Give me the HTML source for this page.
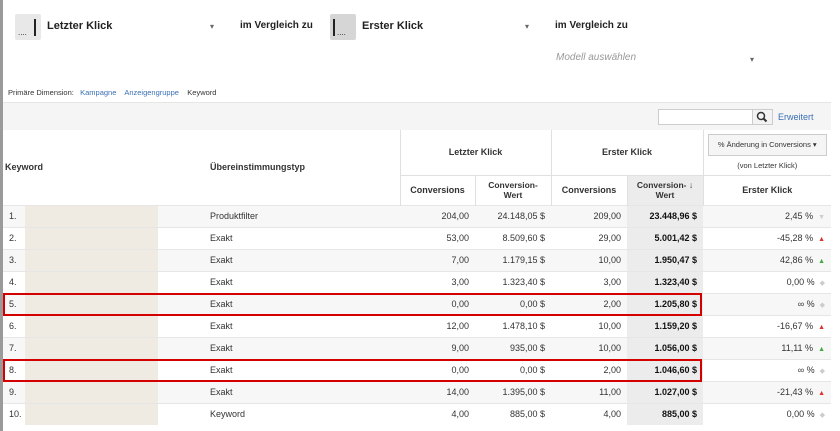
<!DOCTYPE html>
<html><head><meta charset="utf-8"><style>
*{margin:0;padding:0;box-sizing:border-box}
body{width:840px;height:431px;background:#fff;font-family:"Liberation Sans",Arial,sans-serif;font-size:9px;color:#333;position:relative;overflow:hidden}
.a{position:absolute}
.lb{position:absolute;left:0;top:0;width:3px;height:431px;background:#9a9a9a}
.ic{position:absolute;width:26px;height:26px;background:#e8e8e8;border-radius:2px}
.big{font-size:11px;font-weight:bold;color:#222}
.link{color:#3b6fb6}
table{position:absolute;left:3px;top:130px;width:828px;border-collapse:collapse;table-layout:fixed}
td,th{font-size:9px;height:22px;padding:0 6px;white-space:nowrap}
th{font-weight:bold;color:#333;border-left:1px solid #e0e0e0}
tr.r td{border-top:1px solid #e6e6e6}
tr.r:nth-child(odd) td{background:#f7f7f7}
td.n{text-align:right}
td.g{background:#ececec!important;font-weight:bold;color:#111;text-align:right}
td.k{background:#efebe3!important}
.up{color:#d33;font-size:7px}.gr{color:#4a4;font-size:7px}.no{color:#ccc;font-size:7px}
.box{position:absolute;left:3px;width:699px;height:23px;border:2px solid #d40000}
</style></head><body>
<div class="lb"></div>
<div class="ic" style="left:15px;top:14px"><svg width="26" height="26"><rect x="19" y="5" width="2" height="17" fill="#222"/><text x="3" y="21" font-size="8" fill="#222">....</text></svg></div>
<div class="a big" style="left:47px;top:20px">Letzter Klick</div>
<div class="a" style="left:210px;top:22px;color:#666;font-size:8px">▾</div>
<div class="a big" style="left:240px;top:20px;font-size:10px">im Vergleich zu</div>
<div class="ic" style="left:330px;top:14px;background:#d6d6d6"><svg width="26" height="26"><rect x="3" y="5" width="2" height="17" fill="#222"/><text x="7" y="21" font-size="8" fill="#222">....</text></svg></div>
<div class="a big" style="left:362px;top:20px">Erster Klick</div>
<div class="a" style="left:525px;top:22px;color:#666;font-size:8px">▾</div>
<div class="a big" style="left:555px;top:20px;font-size:10px">im Vergleich zu</div>
<div class="a" style="left:556px;top:52px;font-size:10px;font-style:italic;color:#999">Modell auswählen</div>
<div class="a" style="left:750px;top:55px;color:#666;font-size:8px">▾</div>
<div class="a" style="left:8px;top:88px;font-size:7.5px">Primäre Dimension: &nbsp; <span class="link">Kampagne</span> &nbsp;&nbsp; <span class="link">Anzeigengruppe</span> &nbsp;&nbsp; <span style="color:#333">Keyword</span></div>
<div class="a" style="left:3px;top:102px;width:828px;height:28px;background:#f5f5f5;border-top:1px solid #e6e6e6"></div>
<div class="a" style="left:658px;top:109px;width:95px;height:16px;background:#fff;border:1px solid #ccc"></div>
<div class="a" style="left:752px;top:109px;width:21px;height:16px;background:#f3f3f3;border:1px solid #ccc"><svg width="19" height="14"><circle cx="8" cy="6" r="3.5" fill="none" stroke="#333" stroke-width="1.5"/><line x1="10.5" y1="8.5" x2="13.5" y2="11.5" stroke="#333" stroke-width="2"/></svg></div>
<div class="a link" style="left:778px;top:112px;font-size:9px">Erweitert</div>
<table>
<colgroup><col style="width:22px"><col style="width:133px"><col style="width:242px"><col style="width:75px"><col style="width:76px"><col style="width:76px"><col style="width:76px"><col style="width:128px"></colgroup>
<tr style="height:45px"><th colspan="2" rowspan="2" style="text-align:left;border-left:none;padding-left:2px">Keyword</th><th rowspan="2" style="text-align:left;border-left:none;padding-left:52px">Übereinstimmungstyp</th><th colspan="2" style="height:45px">Letzter Klick</th><th colspan="2">Erster Klick</th><th style="font-weight:normal;padding:4px 2px"><div style="border:1px solid #ccc;background:#f5f5f5;height:22px;line-height:20px;font-size:7.5px;margin:0 2px">% Änderung in Conversions ▾</div><div style="font-size:7.5px;margin-top:5px">(von Letzter Klick)</div></th></tr>
<tr style="height:30px;border-top:1px solid #e0e0e0"><th style="border-top:1px solid #e0e0e0">Conversions</th><th style="font-size:8.5px;border-top:1px solid #e0e0e0">Conversion-<br>Wert</th><th style="border-top:1px solid #e0e0e0">Conversions</th><th style="font-size:8.5px;background:#ececec;border-top:1px solid #e0e0e0">Conversion- ↓<br>Wert</th><th style="border-top:1px solid #e0e0e0">Erster Klick</th></tr>
<tr class="r"><td>1.</td><td class="k"></td><td style="padding-left:52px">Produktfilter</td><td class="n">204,00</td><td class="n">24.148,05 $</td><td class="n">209,00</td><td class="g">23.448,96 $</td><td class="n">2,45 % &nbsp;<span class="no">▼</span></td></tr>
<tr class="r"><td>2.</td><td class="k"></td><td style="padding-left:52px">Exakt</td><td class="n">53,00</td><td class="n">8.509,60 $</td><td class="n">29,00</td><td class="g">5.001,42 $</td><td class="n">-45,28 % &nbsp;<span class="up">▲</span></td></tr>
<tr class="r"><td>3.</td><td class="k"></td><td style="padding-left:52px">Exakt</td><td class="n">7,00</td><td class="n">1.179,15 $</td><td class="n">10,00</td><td class="g">1.950,47 $</td><td class="n">42,86 % &nbsp;<span class="gr">▲</span></td></tr>
<tr class="r"><td>4.</td><td class="k"></td><td style="padding-left:52px">Exakt</td><td class="n">3,00</td><td class="n">1.323,40 $</td><td class="n">3,00</td><td class="g">1.323,40 $</td><td class="n">0,00 % &nbsp;<span class="no">◆</span></td></tr>
<tr class="r"><td>5.</td><td class="k"></td><td style="padding-left:52px">Exakt</td><td class="n">0,00</td><td class="n">0,00 $</td><td class="n">2,00</td><td class="g">1.205,80 $</td><td class="n">∞ % &nbsp;<span class="no">◆</span></td></tr>
<tr class="r"><td>6.</td><td class="k"></td><td style="padding-left:52px">Exakt</td><td class="n">12,00</td><td class="n">1.478,10 $</td><td class="n">10,00</td><td class="g">1.159,20 $</td><td class="n">-16,67 % &nbsp;<span class="up">▲</span></td></tr>
<tr class="r"><td>7.</td><td class="k"></td><td style="padding-left:52px">Exakt</td><td class="n">9,00</td><td class="n">935,00 $</td><td class="n">10,00</td><td class="g">1.056,00 $</td><td class="n">11,11 % &nbsp;<span class="gr">▲</span></td></tr>
<tr class="r"><td>8.</td><td class="k"></td><td style="padding-left:52px">Exakt</td><td class="n">0,00</td><td class="n">0,00 $</td><td class="n">2,00</td><td class="g">1.046,60 $</td><td class="n">∞ % &nbsp;<span class="no">◆</span></td></tr>
<tr class="r"><td>9.</td><td class="k"></td><td style="padding-left:52px">Exakt</td><td class="n">14,00</td><td class="n">1.395,00 $</td><td class="n">11,00</td><td class="g">1.027,00 $</td><td class="n">-21,43 % &nbsp;<span class="up">▲</span></td></tr>
<tr class="r"><td>10.</td><td class="k"></td><td style="padding-left:52px">Keyword</td><td class="n">4,00</td><td class="n">885,00 $</td><td class="n">4,00</td><td class="g">885,00 $</td><td class="n">0,00 % &nbsp;<span class="no">◆</span></td></tr>
</table>
<div class="box" style="top:293px"></div>
<div class="box" style="top:359px"></div>
</body></html>
